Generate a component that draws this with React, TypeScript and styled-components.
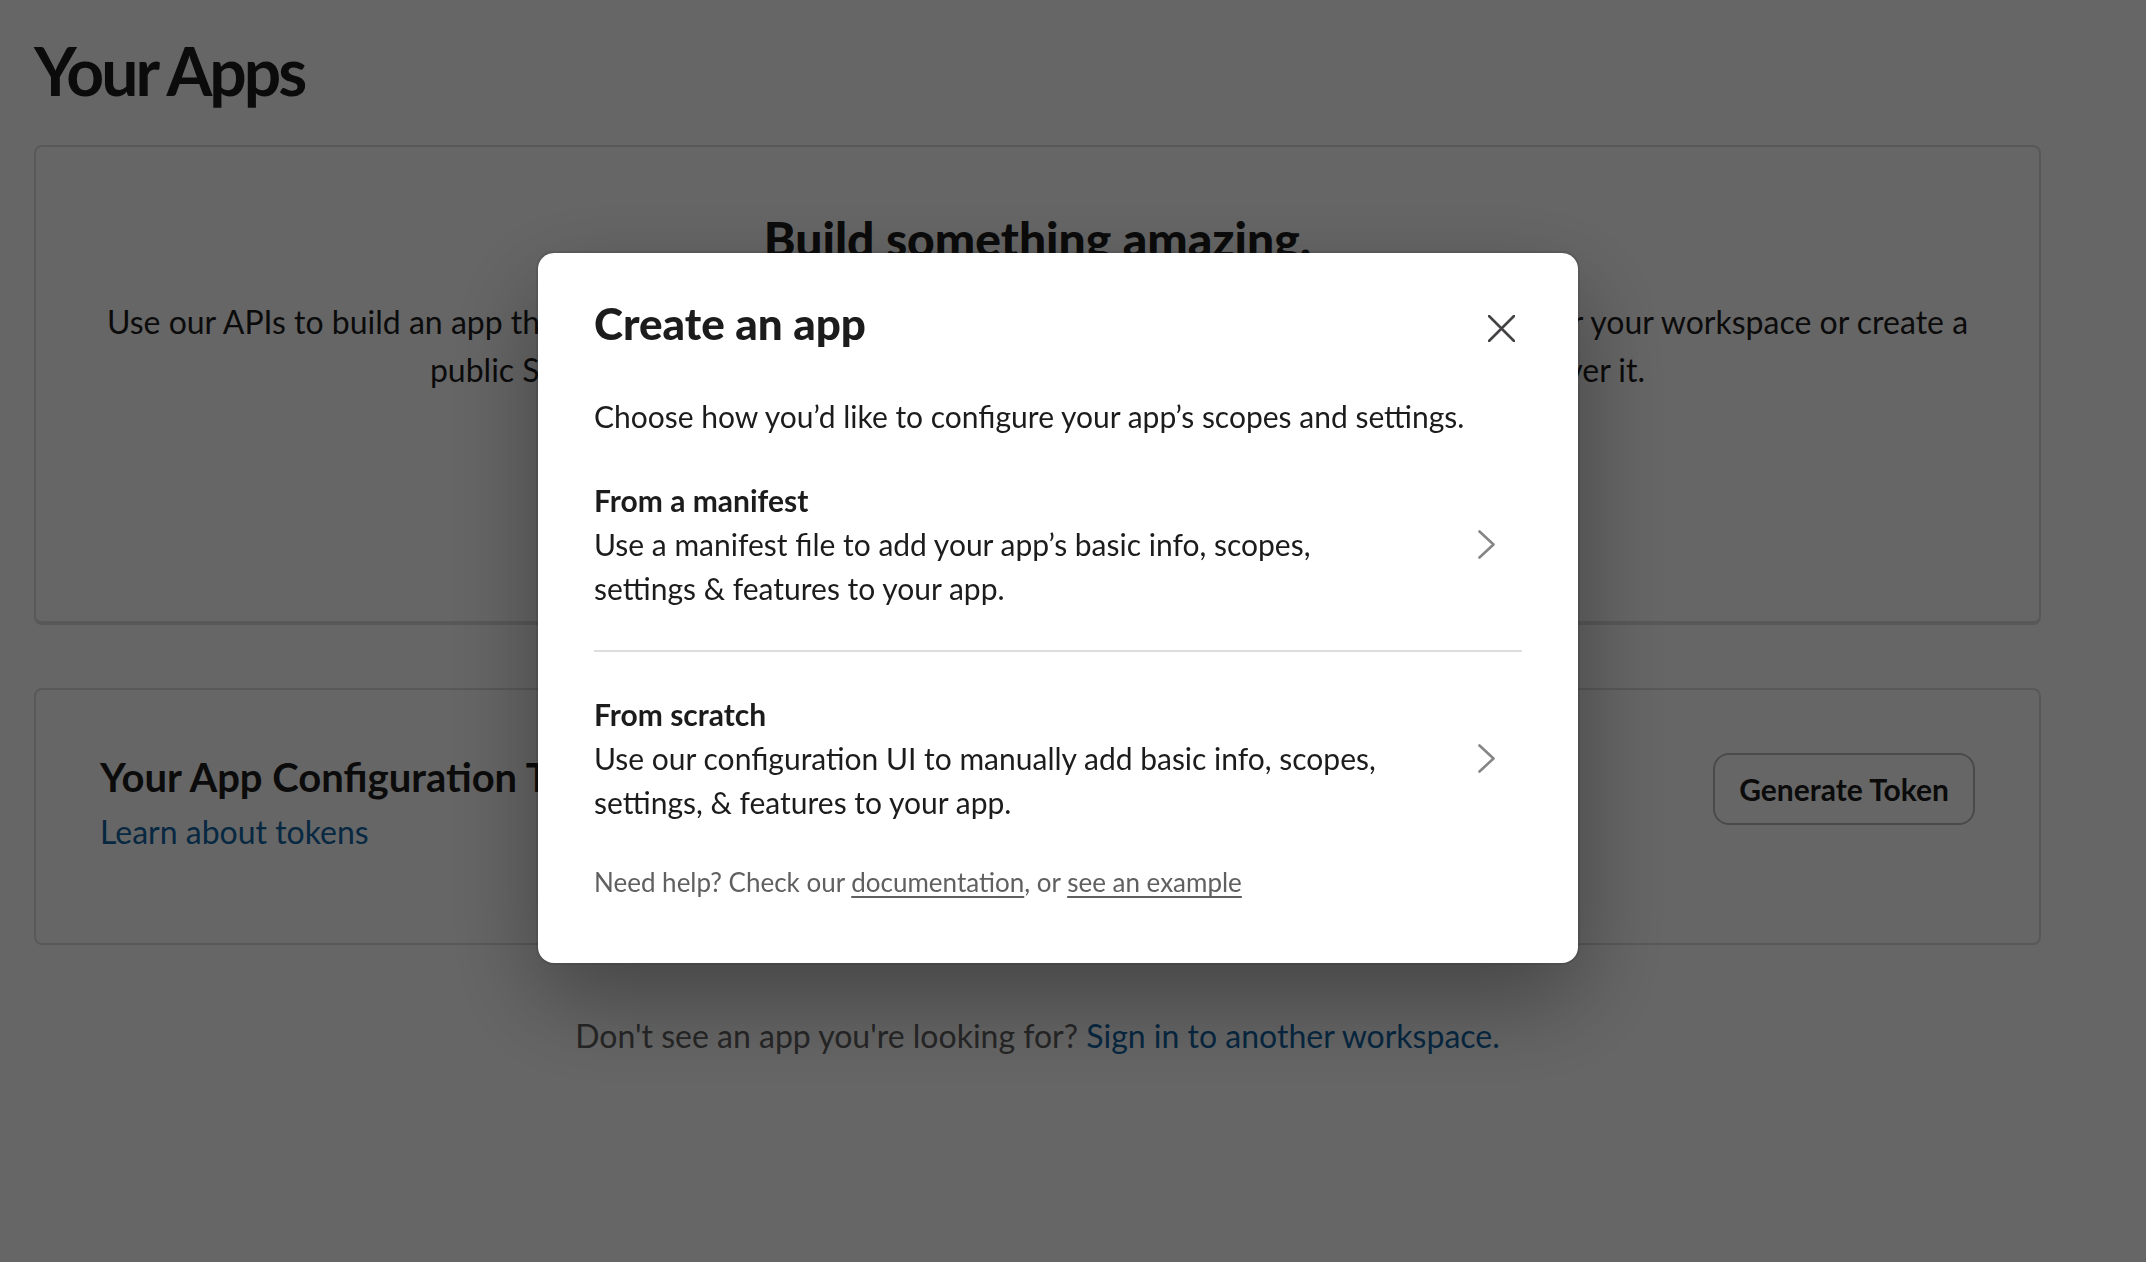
import React from 'react';
import styled, { createGlobalStyle } from 'styled-components';

const GlobalStyle = createGlobalStyle`
  html, body {
    margin: 0;
    padding: 0;
  }
  body {
    font-family: Lato, "Noto Sans", "Liberation Sans", sans-serif;
    color: #1d1c1d;
    background: #ffffff;
    -webkit-font-smoothing: antialiased;
  }
  * {
    box-sizing: border-box;
  }
`;

const Page = styled.main`
  width: 2146px;
  min-height: 1262px;
  padding: 30px 105px 0 34px;
`;

const PageTitle = styled.h1`
  margin: 0 0 33px;
  font-size: 66px;
  line-height: 82px;
  font-weight: 700;
  letter-spacing: -3px;
`;

const Card = styled.section<{ $raised?: boolean }>`
  background: #ffffff;
  border: 2px solid #dddddd;
  border-bottom-width: ${({ $raised }) => ($raised ? '4px' : '2px')};
  border-radius: 8px;
`;

const Hero = styled(Card)`
  display: flex;
  flex-direction: column;
  align-items: center;
  text-align: center;
  padding: 62px 64px 115px;
`;

const HeroTitle = styled.h2`
  margin: 0 0 29px;
  font-size: 48px;
  line-height: 60px;
  font-weight: 900;
`;

const HeroText = styled.p`
  margin: 0;
  font-size: 32px;
  line-height: 48px;
`;

const PrimaryButton = styled.button`
  margin-top: 40px;
  height: 72px;
  padding: 0 32px;
  border: none;
  border-radius: 16px;
  background: #007a5a;
  color: #ffffff;
  font-family: inherit;
  font-size: 30px;
  font-weight: 700;
`;

const TokenCard = styled(Card)`
  display: flex;
  justify-content: space-between;
  align-items: flex-start;
  margin-top: 63px;
  padding: 62px 64px 89px;
`;

const TokenTitle = styled.h3`
  margin: 0 0 8px;
  font-size: 40px;
  line-height: 50px;
  font-weight: 700;
`;

const Link = styled.a`
  color: #1264a3;
  text-decoration: none;
  cursor: pointer;
`;

const TokenLink = styled(Link)`
  display: block;
  font-size: 32px;
  line-height: 44px;
`;

const OutlineButton = styled.button`
  margin-top: 1px;
  height: 72px;
  padding: 0 24px;
  border: 2px solid rgba(29, 28, 29, 0.3);
  border-radius: 16px;
  background: #ffffff;
  color: #1d1c1d;
  font-family: inherit;
  font-size: 30px;
  font-weight: 700;
`;

const FooterNote = styled.p`
  margin: 67px 0 0;
  text-align: center;
  font-size: 32px;
  line-height: 48px;
  color: #616061;
`;

const Overlay = styled.div`
  position: fixed;
  inset: 0;
  display: flex;
  justify-content: center;
  align-items: flex-start;
  padding: 253px 30px 0 0;
  background: rgba(0, 0, 0, 0.6);
`;

const Modal = styled.div`
  width: 1040px;
  padding: 42px 56px 63px;
  background: #ffffff;
  border-radius: 16px;
  box-shadow: 0 0 0 2px rgba(29, 28, 29, 0.13), 0 36px 96px rgba(0, 0, 0, 0.35);
`;

const ModalHeader = styled.header`
  display: flex;
  justify-content: space-between;
  align-items: flex-start;
`;

const ModalTitle = styled.h2`
  margin: 0;
  font-size: 44px;
  line-height: 56px;
  font-weight: 900;
`;

const CloseButton = styled.button`
  display: flex;
  align-items: center;
  justify-content: center;
  width: 48px;
  height: 48px;
  margin: 9px -3px 0 0;
  padding: 0;
  border: none;
  background: transparent;
  cursor: pointer;
`;

const ModalIntro = styled.p`
  margin: 42px 0 0;
  font-size: 30px;
  line-height: 44px;
`;

const Option = styled.div<{ $divided?: boolean }>`
  display: flex;
  align-items: center;
  padding: 40px 0;
  border-top: ${({ $divided }) => ($divided ? '2px solid #dddddd' : 'none')};
  cursor: pointer;
`;

const OptionBody = styled.div`
  flex: 1;
  max-width: 808px;
  font-size: 30px;
  line-height: 44px;
`;

const OptionTitle = styled.div`
  font-weight: 700;
`;

const Chevron = styled.svg`
  flex-shrink: 0;
  margin: 0 27px 0 auto;
`;

const Help = styled.p`
  margin: 0;
  font-size: 26px;
  line-height: 36px;
  color: #616061;

  a {
    color: inherit;
    text-decoration: underline;
    text-underline-offset: 4px;
  }
`;

const options = [
  {
    title: 'From a manifest',
    text: 'Use a manifest file to add your app’s basic info, scopes, settings & features to your app.',
  },
  {
    title: 'From scratch',
    text: 'Use our configuration UI to manually add basic info, scopes, settings, & features to your app.',
  },
];

const ChevronIcon = () => (
  <Chevron width="17" height="29" viewBox="0 0 17 29">
    <polyline points="1.5,1.5 15.5,14.5 1.5,27.5" fill="none" stroke="#868686" strokeWidth="2.6" strokeLinecap="round" strokeLinejoin="round" />
  </Chevron>
);

const App = () => {
  return (
    <>
      <GlobalStyle />
      <Page>
        <PageTitle>Your Apps</PageTitle>
        <Hero $raised>
          <HeroTitle>Build something amazing.</HeroTitle>
          <HeroText>
            Use our APIs to build an app that makes people’s working lives better. You can create an app that’s just for your workspace or create a public Slack app to list in the Slack Marketplace, where anyone on Slack can discover it.
          </HeroText>
          <PrimaryButton>Create New App</PrimaryButton>
        </Hero>
        <TokenCard>
          <div>
            <TokenTitle>Your App Configuration Tokens</TokenTitle>
            <TokenLink>Learn about tokens</TokenLink>
          </div>
          <OutlineButton>Generate Token</OutlineButton>
        </TokenCard>
        <FooterNote>
          Don't see an app you're looking for? <Link>Sign in to another workspace.</Link>
        </FooterNote>
      </Page>

      <Overlay>
        <Modal role="dialog" aria-label="Create an app">
          <ModalHeader>
            <ModalTitle>Create an app</ModalTitle>
            <CloseButton aria-label="Close">
              <svg width="27" height="27" viewBox="0 0 27 27">
                <path d="M1 1 L26 26 M26 1 L1 26" stroke="#454245" strokeWidth="2.6" strokeLinecap="round" />
              </svg>
            </CloseButton>
          </ModalHeader>
          <ModalIntro>Choose how you’d like to configure your app’s scopes and settings.</ModalIntro>
          {options.map((option, i) => (
            <Option key={option.title} $divided={i > 0}>
              <OptionBody>
                <OptionTitle>{option.title}</OptionTitle>
                {option.text}
              </OptionBody>
              <ChevronIcon />
            </Option>
          ))}
          <Help>
            Need help? Check our <a>documentation</a>, or <a>see an example</a>
          </Help>
        </Modal>
      </Overlay>
    </>
  );
};

export default App;
